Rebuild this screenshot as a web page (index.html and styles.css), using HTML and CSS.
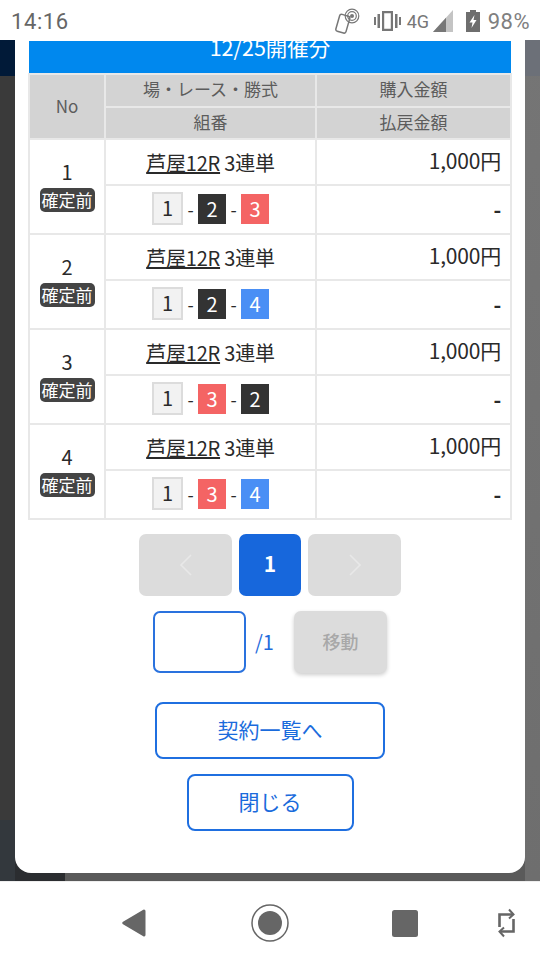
FILE: index.html
```html
<!DOCTYPE html>
<html lang="ja">
<head>
    <meta charset="utf-8">
    <title>契約一覧</title>
    <link rel="stylesheet" href="styles.css">
</head>
<body>
<div class="screen">
    <header class="status-bar">
        <span class="clock">14:16</span>
        <div class="status-icons">
            <svg class="ic-nfc" width="25" height="26" viewBox="0 0 25 26" fill="none" stroke="#777">
                <rect x="2.500" y="7" width="10.500" height="17.500" rx="2" transform="rotate(16 8 16)" stroke-width="1.500"/>
                <circle cx="17" cy="8" r="2" fill="#777" stroke="none"/>
                <circle cx="17" cy="8" r="4.300" stroke-width="1.200"/>
                <circle cx="17" cy="8" r="6.800" stroke-width="1.200"/>
            </svg>
            <svg class="ic-vibrate" width="27" height="20" viewBox="0 0 27 20" fill="#777">
                <path d="M8 0h11v20H8zM10.200 2.200v15.600h6.600V2.200z" fill-rule="evenodd"/>
                <rect x="3.500" y="3" width="2.500" height="14"/>
                <rect x="21" y="3" width="2.500" height="14"/>
                <rect x="0" y="6" width="2" height="8"/>
                <rect x="25" y="6" width="2" height="8"/>
            </svg>
            <span class="net">4G</span>
            <svg class="ic-signal" width="20" height="22" viewBox="0 0 20 22">
                <path d="M0 22 20 0v22z" fill="#c4c4c4"/>
                <path d="M0 22 13 7.700V22z" fill="#777"/>
            </svg>
            <svg class="ic-battery" width="14" height="22" viewBox="0 0 14 22">
                <path d="M4 0h6v2h4v20H0V2h4z" fill="#6e6e6e"/>
                <path d="M8.500 5 3.500 12.500h3L5.500 18l5-8h-3z" fill="#fff"/>
            </svg>
            <span class="battery">98%</span>
        </div>
    </header>

    <main class="stage">
        <section class="modal">
            <h2 class="modal-title">12/25開催分</h2>
            <table class="bets">
                <colgroup>
                    <col class="col-no">
                    <col class="col-race">
                    <col class="col-money">
                </colgroup>
                <thead>
                    <tr>
                        <th rowspan="2">No</th>
                        <th>場・レース・勝式</th>
                        <th>購入金額</th>
                    </tr>
                    <tr>
                        <th>組番</th>
                        <th>払戻金額</th>
                    </tr>
                </thead>
                <tbody>
                    <tr class="row-top">
                        <td rowspan="2" class="no">1<span class="badge">確定前</span></td>
                        <td class="race"><a href="#">芦屋12R</a> 3連単</td>
                        <td class="money">1,000円</td>
                    </tr>
                    <tr class="row-bottom">
                        <td class="combo">
                            <span class="chip chip-white">1</span><span class="sep">-</span><span class="chip chip-black">2</span><span class="sep">-</span><span class="chip chip-red">3</span>
                        </td>
                        <td class="money money-dash">-</td>
                    </tr>
                    <tr class="row-top">
                        <td rowspan="2" class="no">2<span class="badge">確定前</span></td>
                        <td class="race"><a href="#">芦屋12R</a> 3連単</td>
                        <td class="money">1,000円</td>
                    </tr>
                    <tr class="row-bottom">
                        <td class="combo">
                            <span class="chip chip-white">1</span><span class="sep">-</span><span class="chip chip-black">2</span><span class="sep">-</span><span class="chip chip-blue">4</span>
                        </td>
                        <td class="money money-dash">-</td>
                    </tr>
                    <tr class="row-top">
                        <td rowspan="2" class="no">3<span class="badge">確定前</span></td>
                        <td class="race"><a href="#">芦屋12R</a> 3連単</td>
                        <td class="money">1,000円</td>
                    </tr>
                    <tr class="row-bottom">
                        <td class="combo">
                            <span class="chip chip-white">1</span><span class="sep">-</span><span class="chip chip-red">3</span><span class="sep">-</span><span class="chip chip-black">2</span>
                        </td>
                        <td class="money money-dash">-</td>
                    </tr>
                    <tr class="row-top">
                        <td rowspan="2" class="no">4<span class="badge">確定前</span></td>
                        <td class="race"><a href="#">芦屋12R</a> 3連単</td>
                        <td class="money">1,000円</td>
                    </tr>
                    <tr class="row-bottom">
                        <td class="combo">
                            <span class="chip chip-white">1</span><span class="sep">-</span><span class="chip chip-red">3</span><span class="sep">-</span><span class="chip chip-blue">4</span>
                        </td>
                        <td class="money money-dash">-</td>
                    </tr>
                </tbody>
            </table>

            <nav class="pager">
                <button class="page-arrow" type="button">
                    <svg width="16" height="22" viewBox="0 0 16 22" fill="none" stroke="#e8e8e8" stroke-width="1.6"><path d="M13 1 3 11l10 10"/></svg>
                </button>
                <button class="page-current" type="button">1</button>
                <button class="page-arrow" type="button">
                    <svg width="16" height="22" viewBox="0 0 16 22" fill="none" stroke="#e8e8e8" stroke-width="1.6"><path d="M3 1l10 10L3 21"/></svg>
                </button>
            </nav>

            <div class="jump">
                <input class="jump-input" type="text">
                <span class="jump-total">/1</span>
                <button class="jump-btn" type="button">移動</button>
            </div>

            <a class="btn btn-list" href="#">契約一覧へ</a>
            <a class="btn btn-close" href="#">閉じる</a>
        </section>
    </main>

    <footer class="nav-bar">
        <svg class="nav-back" width="24" height="28" viewBox="0 0 24 28">
            <path d="M22 0.500a1.500 1.500 0 0 1 1.500 1.500v24a1.500 1.500 0 0 1-2.200 1.300L1 15.300a1.500 1.500 0 0 1 0-2.600L21.300 0.700z" fill="#666"/>
        </svg>
        <svg class="nav-home" width="38" height="38" viewBox="0 0 38 38">
            <circle cx="19" cy="19" r="18" fill="none" stroke="#666" stroke-width="1.500"/>
            <circle cx="19" cy="19" r="12" fill="#666"/>
        </svg>
        <svg class="nav-recent" width="26" height="27" viewBox="0 0 26 27">
            <rect width="26" height="27" rx="2.500" fill="#666"/>
        </svg>
        <svg class="nav-rotate" width="17" height="30" viewBox="0 0 17 30" fill="none" stroke="#666" stroke-width="2.600">
            <path d="M1.500 19V6.500H14"/>
            <path d="M11 1.500 15.500 6.500 11 10.500" stroke-width="2"/>
            <path d="M15.500 11v12.500H3"/>
            <path d="M6 19.500 1.500 23.500 6 28.500" stroke-width="2"/>
        </svg>
    </footer>
</div>
</body>
</html>
```

FILE: styles.css
```css
* {
    box-sizing: border-box;
}

body {
    margin: 0;
    font-family: "Noto Sans CJK JP", "Noto Sans", sans-serif;
    color: #2a2a2a;
}

.screen {
    width: 540px;
    height: 960px;
    display: flex;
    flex-direction: column;
    overflow: hidden;
}

/* status bar */
.status-bar {
    height: 40px;
    flex: none;
    display: flex;
    align-items: center;
    justify-content: space-between;
    padding: 2px 10px 0 11px;
    background: #fff;
}

.clock {
    font: 22px "Roboto", sans-serif;
    color: #666;
    letter-spacing: 0.6px;
}

.status-icons {
    display: flex;
    align-items: center;
}

.ic-nfc {
    margin-right: 14px;
}

.ic-vibrate {
    margin-right: 6px;
}

.net {
    font: 18px "Roboto", sans-serif;
    color: #777;
    width: 22px;
    margin-right: 4px;
    white-space: nowrap;
}

.ic-signal {
    margin-right: 13px;
}

.ic-battery {
    margin-right: 8px;
}

.battery {
    font: 22px "Roboto", sans-serif;
    color: #808080;
    letter-spacing: 0.5px;
}

/* dimmed page behind the modal */
.stage {
    height: 841px;
    flex: none;
    padding: 0 15px 8px;
    background:
        linear-gradient(#011a38 36px, transparent 36px) 0 0 / 15px 100% no-repeat,
        linear-gradient(#6c7078 36px, transparent 36px) 100% 0 / 15px 100% no-repeat,
        linear-gradient(#3a3a3a 780px, #33383d 780px) 0 0 / 15px 100% no-repeat,
        linear-gradient(#757575, #6e6e6e) 100% 0 / 15px 100% no-repeat,
        linear-gradient(90deg, #2b2d30 65px, #5a5a5a 65px);
}

.modal {
    height: 833px;
    display: flex;
    flex-direction: column;
    align-items: center;
    padding: 1px 14px 0;
    background: #fff;
    border-radius: 0 0 16px 16px;
}

.modal-title {
    width: 100%;
    height: 32px;
    flex: none;
    margin: 0;
    overflow: hidden;
    background: #0088ee;
    color: #fff;
    font-size: 21.5px;
    font-weight: 400;
    line-height: 12px;
    text-align: center;
}

/* bets table */
.bets {
    width: 482px;
    flex: none;
    border-collapse: collapse;
    table-layout: fixed;
}

.col-no {
    width: 76px;
}

.col-race {
    width: 211px;
}

.col-money {
    width: 195px;
}

.bets th,
.bets td {
    border: 2px solid #e8e8e8;
    padding: 0;
}

.bets th {
    height: 32.5px;
    padding-bottom: 3px;
    background: #d3d3d3;
    color: #5c5c5c;
    font-size: 17px;
    font-weight: 400;
}

.row-top td {
    height: 46px;
}

.row-bottom td {
    height: 49px;
}

.bets .no {
    padding-bottom: 2px;
    text-align: center;
    font-size: 20px;
    line-height: 26px;
}

.badge {
    display: block;
    width: 55px;
    height: 24px;
    margin: 3px auto 0;
    border-radius: 5px;
    background: #444;
    color: #fff;
    font-size: 17px;
    line-height: 23px;
}

.race {
    text-align: center;
    font-size: 20px;
    letter-spacing: -0.2px;
}

.race a {
    color: inherit;
    text-decoration: underline;
}

.bets .money {
    padding-right: 9px;
    padding-bottom: 5px;
    text-align: right;
    font-size: 21px;
    letter-spacing: -0.2px;
}

.bets .money-dash {
    padding-top: 0;
    padding-bottom: 2px;
    font-weight: 700;
}

.bets .combo {
    padding-bottom: 2px;
    text-align: center;
    font-size: 0;
}

.chip {
    display: inline-block;
    width: 28px;
    height: 30px;
    font-size: 20px;
    line-height: 29px;
    text-align: center;
    vertical-align: middle;
}

.chip-white {
    width: 31px;
    height: 33px;
    line-height: 28px;
    border: 2px solid #dcdcdc;
    background: #f2f2f2;
}

.chip-black {
    background: #333;
    color: #fff;
}

.chip-red {
    background: #f46464;
    color: #fff;
}

.chip-blue {
    background: #4a8ff5;
    color: #fff;
}

.sep {
    display: inline-block;
    width: 15px;
    font-size: 18px;
    text-align: center;
    vertical-align: middle;
}

/* pagination */
.pager {
    display: flex;
    gap: 7px;
    margin-top: 14px;
}

.pager button {
    height: 62px;
    border: 0;
    border-radius: 7px;
    padding: 0;
    font-family: inherit;
}

.page-arrow {
    width: 93px;
    background: #dcdcdc;
    display: flex;
    align-items: center;
    justify-content: center;
}

.pager .page-current {
    width: 62px;
    padding-bottom: 4px;
    background: #1767dc;
    color: #fff;
    font-size: 21px;
    font-weight: 700;
}

.jump {
    display: flex;
    align-items: center;
    margin-top: 15px;
}

.jump-input {
    width: 93px;
    height: 62px;
    border: 2px solid #2a72de;
    border-radius: 7px;
    background: #fff;
}

.jump-total {
    width: 48px;
    padding-left: 9px;
    padding-bottom: 2px;
    font-size: 20px;
    color: #1f6bdc;
}

.jump-btn {
    width: 93px;
    height: 62px;
    padding: 0 0 3px;
    border: 0;
    border-radius: 7px;
    background: #dcdcdc;
    color: #a8a8a8;
    font-family: inherit;
    font-size: 18px;
    font-weight: 500;
    box-shadow: 0 2px 4px rgba(0, 0, 0, 0.2);
}

.btn {
    display: flex;
    align-items: center;
    justify-content: center;
    height: 57px;
    padding-bottom: 3px;
    border: 2px solid #1f6fe0;
    border-radius: 8px;
    color: #1a6bdc;
    font-size: 21px;
    text-decoration: none;
}

.btn-list {
    width: 230px;
    margin-top: 29px;
}

.btn-close {
    width: 167px;
    margin-top: 15px;
}

/* android nav bar */
.nav-bar {
    flex: 1;
    display: flex;
    align-items: flex-start;
    padding: 27px 0 0 122px;
    background: #fff;
    border-top: 1px solid #eee;
}

.nav-back {
    margin-right: 105px;
}

.nav-home {
    margin-right: 103px;
    margin-top: -5px;
}

.nav-recent {
    margin-right: 80px;
    margin-top: 1px;
}

.nav-rotate {
    margin-top: -1px;
}
```
